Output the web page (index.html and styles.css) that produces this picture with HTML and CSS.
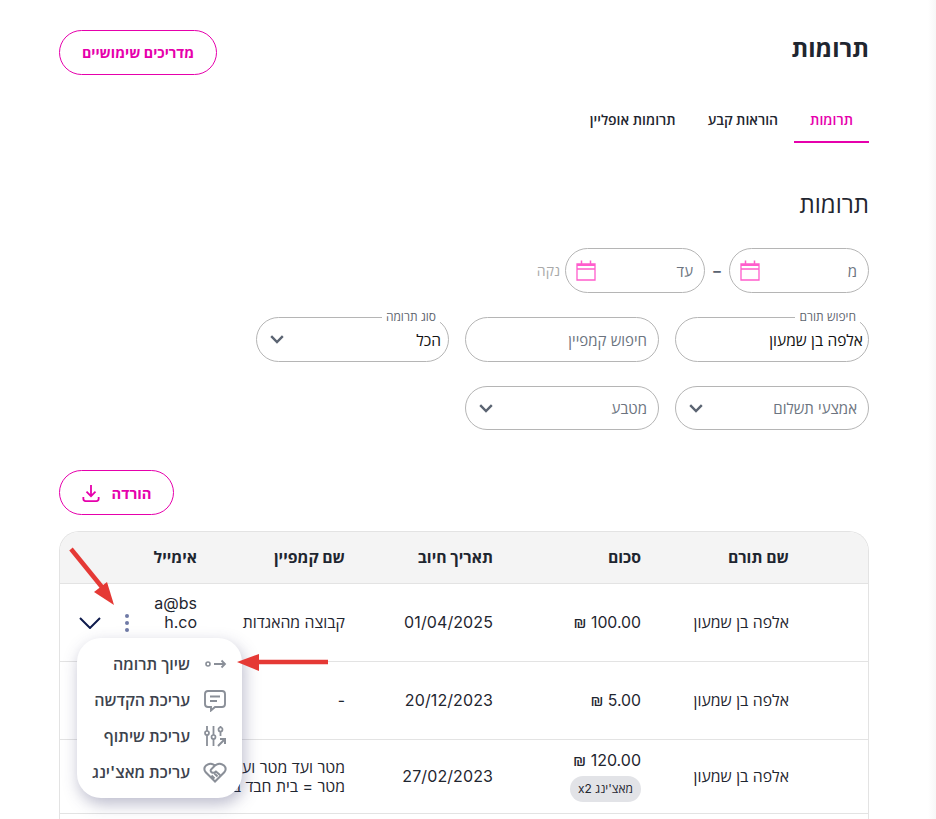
FILE: index.html
```html
<!DOCTYPE html>
<html lang="he" dir="rtl">
<head>
<meta charset="utf-8">
<title>תרומות</title>
<link rel="stylesheet" href="styles.css">
</head>
<body>
<div class="app">
  <main class="page">
    <header class="top">
      <h1>תרומות</h1>
      <a class="btn btn-guides">מדריכים שימושיים</a>
    </header>
    <nav class="tabs">
      <a class="tab active">תרומות</a>
      <a class="tab">הוראות קבע</a>
      <a class="tab">תרומות אופליין</a>
    </nav>
    <h2>תרומות</h2>
    <div class="dates">
      <div class="field date"><span>מ</span>
        <svg class="cal" viewBox="0 0 20 21" width="20" height="21"><path d="M1 4h18v16H1zM1 9h18" fill="none" stroke="#ff5ccc" stroke-width="1.300"/><path d="M1 4h18v2H1z" fill="#ff5ccc"/><path d="M5.500 0.500v4M14.500 0.500v4" fill="none" stroke="#ff5ccc" stroke-width="1.500"/></svg>
      </div>
      <span class="dash">–</span>
      <div class="field date"><span>עד</span>
        <svg class="cal" viewBox="0 0 20 21" width="20" height="21"><path d="M1 4h18v16H1zM1 9h18" fill="none" stroke="#ff5ccc" stroke-width="1.300"/><path d="M1 4h18v2H1z" fill="#ff5ccc"/><path d="M5.500 0.500v4M14.500 0.500v4" fill="none" stroke="#ff5ccc" stroke-width="1.500"/></svg>
      </div>
      <span class="clear">נקה</span>
    </div>
    <div class="filters">
      <div class="field filled donor"><label>חיפוש תורם</label><span class="val">אלפה בן שמעון</span></div>
      <div class="field"><span class="ph">חיפוש קמפיין</span></div>
      <div class="field filled kind"><label>סוג תרומה</label><span class="val">הכל</span>
        <svg class="chev" viewBox="0 0 14 9" width="14" height="9"><path d="M1.200 1.200 7 7l5.800-5.800" fill="none" stroke="#5b6472" stroke-width="2.400"/></svg></div>
      <div class="field short"><span class="ph">אמצעי תשלום</span>
        <svg class="chev" viewBox="0 0 14 9" width="14" height="9"><path d="M1.200 1.200 7 7l5.800-5.800" fill="none" stroke="#5b6472" stroke-width="2.400"/></svg></div>
      <div class="field short"><span class="ph">מטבע</span>
        <svg class="chev" viewBox="0 0 14 9" width="14" height="9"><path d="M1.200 1.200 7 7l5.800-5.800" fill="none" stroke="#5b6472" stroke-width="2.400"/></svg></div>
    </div>
    <div class="actions">
      <a class="btn btn-download">הורדה
        <svg viewBox="0 0 20 20" width="18" height="18"><path d="M10 1v12M5 8.500 10 13.500l5-5M1.500 14.500v2q0 2.500 2.500 2.500h12q2.500 0 2.500-2.500v-2" fill="none" stroke="#e600ac" stroke-width="2"/></svg>
      </a>
    </div>
    <section class="table">
      <div class="row head">
        <div>שם תורם</div><div>סכום</div><div>תאריך חיוב</div><div>שם קמפיין</div><div class="email-head">אימייל</div>
      </div>
      <div class="row r1">
        <div>אלפה בן שמעון</div><div>100.00 ₪</div><div class="when">01/04/2025</div><div>קבוצה מהאגדות</div><div class="email">a@bsh.com</div>
        <div class="acts">
          <svg viewBox="0 0 6 20" width="6" height="20"><circle cx="3" cy="3" r="2" fill="#6f7aa6"/><circle cx="3" cy="10" r="2" fill="#6f7aa6"/><circle cx="3" cy="17" r="2" fill="#6f7aa6"/></svg>
          <svg viewBox="0 0 22 12" width="22" height="12"><path d="M1 1l10 10L21 1" fill="none" stroke="#0f1b4d" stroke-width="2"/></svg>
        </div>
      </div>
      <div class="row r2">
        <div>אלפה בן שמעון</div><div>5.00 ₪</div><div class="when">20/12/2023</div><div>-</div><div class="email"></div>
      </div>
      <div class="row r3">
        <div>אלפה בן שמעון</div>
        <div class="amount"><span>120.00 ₪</span><span class="tag">מאצ'ינג x2</span></div>
        <div class="when">27/02/2023</div><div class="clip">מטר ועד מטר ועד<br>מטר = בית חבד ב</div><div class="email"></div>
      </div>
    </section>
  </main>
  <div class="scrollbar"></div>
</div>

<ul class="menu">
  <li>
    <svg viewBox="0 0 24 24" width="24" height="24"><circle cx="5" cy="12" r="2" fill="none" stroke="#8a8f98" stroke-width="1.600"/><path d="M11 12h11M18.500 8.500 22 12l-3.500 3.500" fill="none" stroke="#8a8f98" stroke-width="1.800"/></svg>
    שיוך תרומה</li>
  <li>
    <svg viewBox="0 0 24 24" width="24" height="24"><path d="M5 3h14q3 0 3 3v10q0 3-3 3h-7l-4 3.500V19H5q-3 0-3-3V6q0-3 3-3zM7 8.500h10M7 13h7" fill="none" stroke="#8a8f98" stroke-width="1.900"/></svg>
    עריכת הקדשה</li>
  <li>
    <svg viewBox="0 0 24 24" width="24" height="24"><path d="M4 2v5M4 11v11M10.500 2v9M10.500 15v7M17.500 2v1M17.500 8v4" fill="none" stroke="#8a8f98" stroke-width="1.800"/><circle cx="4" cy="9" r="2" fill="none" stroke="#8a8f98" stroke-width="1.700"/><circle cx="10.500" cy="13" r="2" fill="none" stroke="#8a8f98" stroke-width="1.700"/><circle cx="17.500" cy="5.500" r="2" fill="none" stroke="#8a8f98" stroke-width="1.700"/><path d="M15 22l7-7M17 15h5v5" fill="none" stroke="#8a8f98" stroke-width="2"/></svg>
    עריכת שיתוף</li>
  <li>
    <svg viewBox="0 0 24 24" width="24" height="24"><path d="M12 21.500 2.500 12Q0 8.500 3 5.500q4.500-3.500 9 0 4.500-3.500 9 0 3 3 .5 6.500zM12 5.500l-4 4q-1 2 1 3 2 1 4-1l4 3.500M8.500 15.500l3 3M11.500 13.500l3 3" fill="none" stroke="#8a8f98" stroke-width="2"/></svg>
    עריכת מאצ'ינג</li>
</ul>
<svg class="arrows" viewBox="0 0 936 819" width="936" height="819">
  <path d="M71 549 106 592" stroke="#e53935" stroke-width="4.500" fill="none"/>
  <path d="M114 605 107 582 94 592Z" fill="#e53935"/>
  <path d="M328 662H254" stroke="#e53935" stroke-width="4.500" fill="none"/>
  <path d="M237 662 259 654V671Z" fill="#e53935"/>
</svg>
</body>
</html>
```
FILE: styles.css
```css
* { box-sizing: border-box; }
html, body { margin: 0; height: 100%; overflow: hidden; }
body {
  font-family: Inter, "Open Sans", sans-serif;
  color: #1f2630;
  background: #fff;
  font-size: 16px;
}
.app { display: flex; height: 819px; direction: ltr; }
.scrollbar { flex: none; width: 8px; background: linear-gradient(to right, #fff, #f7f7f7); }
.page { flex: 1; direction: rtl; padding: 30px 59px 0; height: 819px; overflow: hidden; }
.top { display: flex; justify-content: space-between; align-items: flex-start; height: 45px; }
h1 { font-size: 24px; font-weight: 700; margin: 0; line-height: 36px; font-family: "Open Sans", sans-serif; }
.btn {
  display: inline-flex; align-items: center; justify-content: center; height: 45px;
  border: 1px solid #e600ac; border-radius: 23px; color: #e600ac; font-weight: 700; background: #fff;
}
.btn-guides { width: 158px; font-size: 14.300px; }
.tabs { display: flex; margin-top: 24px; height: 44px; }
.tab { padding: 11px 16px 0; font-weight: 600; font-size: 14px; height: 44px; }
.tab.active { color: #e600ac; border-bottom: 2px solid #e600ac; }
h2 { font-size: 24px; font-weight: 400; margin: 44px 0 0; line-height: 36px; }
.dates { display: flex; align-items: center; margin-top: 25px; }
.field {
  position: relative; display: flex; align-items: center; justify-content: space-between;
  height: 45px; border: 1px solid #b5b5b5; border-radius: 23px; padding: 0 11px 0 13px;
  color: #6c7480; background: #fff; font-size: 15px;
}
.date { width: 140px; padding-left: 10px; }
.cal { display: block; }
.dash { width: 24px; text-align: center; font-weight: 700; color: #5b6472; font-size: 15px; }
.clear { color: #a9a9a9; margin-right: 5px; font-size: 14px; }
.filters { display: grid; grid-template-columns: 194px 194px 193px; gap: 24px 16px; margin-top: 24px; }
.short { height: 44px; }
.filled .val { color: #111; font-size: 15.500px; }
.donor { padding-right: 5px; }
.kind { padding-right: 7px; }
.field label {
  position: absolute; top: -9px; right: 8px; padding: 0 4px; background: #fff;
  font-size: 12px; line-height: 15px; color: #5f6670;
}
.ph { color: #6c7480; }
.actions { display: flex; justify-content: flex-end; margin-top: 40px; }
.btn-download { width: 115px; gap: 12px; font-size: 14.800px; }
.table {
  margin-top: 16px; border: 1px solid #e3e3e3; border-bottom: 0;
  border-radius: 20px 20px 0 0; height: 300px;
}
.row {
  display: grid; grid-template-columns: repeat(4, 148px) 44px 1fr; padding-right: 79px;
  align-items: center; border-bottom: 1px solid #e3e3e3; line-height: 19px; font-size: 15.800px;
}
.head { height: 52px; background: #f4f4f4; border-radius: 19px 19px 0 0; font-weight: 700; }
.r1, .r2 { height: 78px; }
.r3 { height: 74px; }
.email { word-break: break-all; font-size: 16px; }
.email-head { white-space: nowrap; }
.when { letter-spacing: .1px; font-size: 16px; }
.acts { display: flex; align-items: center; gap: 23px; padding-right: 23px; }
.acts svg { flex: none; }
.amount { display: flex; flex-direction: column; align-items: flex-start; gap: 6px; font-size: 16px; }
.tag { background: #e2e3e7; border-radius: 13px; font-size: 12px; line-height: 26px; padding: 0 8px; }
.clip { white-space: nowrap; }
.menu {
  position: absolute; left: 77px; top: 638px; width: 165px; height: 160px; margin: 0; padding: 8px 15px;
  list-style: none; background: #fff; border-radius: 24px; box-shadow: 2px 6px 16px rgba(60, 60, 110, .35);
}
.menu li {
  display: flex; align-items: center; gap: 13px; height: 36px; font-size: 16px; font-weight: 600; color: #3d434d;
  white-space: nowrap;
}
.menu li svg { flex: none; }
.arrows { position: absolute; left: 0; top: 0; pointer-events: none; }
```
